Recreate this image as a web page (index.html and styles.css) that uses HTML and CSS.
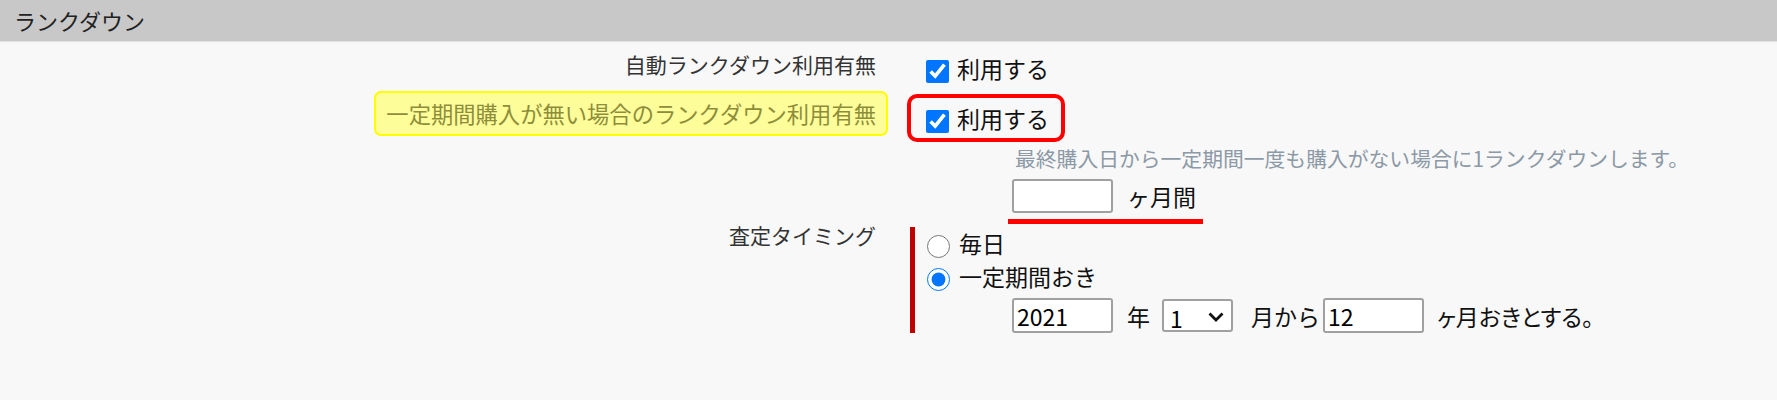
FILE: index.html
```html
<!DOCTYPE html>
<html lang="ja">
<head>
<meta charset="utf-8">
<title>ランクダウン</title>
<link rel="stylesheet" href="styles.css">
</head>
<body>
<div class="panel">
  <div class="panel-title">ランクダウン</div>
  <div class="form">
    <div class="row">
      <div class="label-cell"><span class="label">自動ランクダウン利用有無</span></div>
      <div class="field field-auto">
        <label class="check"><input type="checkbox" checked><span>利用する</span></label>
      </div>
    </div>
    <div class="row">
      <div class="label-cell"><span class="label label-highlight">一定期間購入が無い場合のランクダウン利用有無</span></div>
      <div class="field">
        <label class="check check-boxed"><input type="checkbox" checked><span>利用する</span></label>
        <p class="note">最終購入日から一定期間一度も購入がない場合に1ランクダウンします。</p>
        <div class="months-line"><input type="text" class="num-input"><span class="unit">ヶ月間</span></div>
      </div>
    </div>
    <div class="row row-timing">
      <div class="label-cell"><span class="label">査定タイミング</span></div>
      <div class="field field-timing">
        <label class="radio"><input type="radio" name="timing"><span>毎日</span></label>
        <label class="radio"><input type="radio" name="timing" checked><span>一定期間おき</span></label>
        <div class="interval">
          <input type="text" class="num-input" value="2021">
          <span class="u-year">年</span>
          <span class="select-wrap">
            <select class="month-select"><option>1</option></select>
            <svg class="chevron" viewBox="0 0 16 10" width="16" height="10"><polyline points="1.5,1.5 8,8 14.5,1.5" fill="none" stroke="#111" stroke-width="2.8"/></svg>
          </span>
          <span class="u-from">月から</span>
          <input type="text" class="num-input" value="12">
          <span class="u-tail">ヶ月おきとする。</span>
        </div>
      </div>
    </div>
  </div>
</div>
</body>
</html>
```
FILE: styles.css
```css
* { box-sizing: border-box; }
html, body { margin: 0; padding: 0; }
body {
  background: #f8f8f8;
  font-family: "Noto Sans CJK JP", "Noto Sans", sans-serif;
  color: #222;
}
.panel-title {
  height: 42px;
  background: #c8c8c8;
  border-bottom: 1px solid #e2e2e2;
  padding-left: 14px;
  font-size: 22px;
  line-height: 41px;
  color: #222;
}
.form { padding-top: 2px; }
.row { display: flex; align-items: flex-start; }
.label-cell {
  width: 888px;
  flex: none;
  display: flex;
  justify-content: flex-end;
}
.label {
  display: inline-block;
  border: 2px solid transparent;
  padding: 4px 10px;
  font-size: 21px;
  line-height: 28px;
  color: #333;
  white-space: nowrap;
}
.label-highlight {
  background: #fdfd9a;
  border-color: #ffff00;
  border-radius: 7px;
  color: #8d8d3a;
  font-size: 22.3px;
  line-height: 33px;
}
.row-timing .label { margin-top: -9px; }
.field { margin-left: 19px; }
.field-auto { padding: 6px 0 5px 19px; }
.check {
  display: flex;
  align-items: center;
  font-size: 23px;
  line-height: 36px;
  color: #111;
}
.check input, .radio input {
  width: 23px;
  height: 23px;
  margin: 6px 8px 0 0;
  accent-color: #0075ff;
  flex: none;
}
.check-boxed {
  width: fit-content;
  margin-top: 3px;
  border: 4px solid #ff0000;
  border-radius: 10px;
  padding: 2px 12px 2px 15px;
}
.note {
  margin: 3px 0 0 108px;
  font-size: 20.8px;
  line-height: 26px;
  color: #8c99a6;
  white-space: nowrap;
}
.months-line {
  display: flex;
  align-items: center;
  width: fit-content;
  margin: 8px 0 0 101px;
  padding: 0 7px 6px 4px;
  border-bottom: 5px solid #ff0000;
}
.num-input {
  width: 101px;
  height: 34px;
  border: 2px solid #a0a0a0;
  border-radius: 3px;
  background: #fff;
  font-family: "Noto Sans CJK JP", "Noto Sans", sans-serif;
  font-size: 23px;
  color: #000;
  padding: 0 3px;
  flex: none;
}
.unit { margin-left: 14px; font-size: 23px; color: #111; }
.field-timing {
  margin-top: 3px;
  margin-left: 22px;
  border-left: 5px solid #c00000;
  padding-left: 12px;
}
.radio {
  display: flex;
  align-items: center;
  font-size: 23px;
  line-height: 33px;
  color: #111;
}
.radio input { margin-right: 9px; }
.interval {
  display: flex;
  align-items: center;
  margin-top: 5px;
  padding-left: 85px;
  font-size: 23px;
  color: #111;
  white-space: nowrap;
}
.interval .num-input { height: 35px; }
.u-year { margin-left: 14px; }
.select-wrap { position: relative; margin-left: 12px; display: flex; }
.month-select {
  appearance: none;
  -webkit-appearance: none;
  width: 71px;
  height: 33px;
  border: 2px solid #a0a0a0;
  border-radius: 3px;
  background: #fff;
  font-family: "Noto Sans CJK JP", "Noto Sans", sans-serif;
  font-size: 23px;
  color: #000;
  padding: 0 0 0 6px;
}
.chevron {
  position: absolute;
  left: 46px;
  top: 50%;
  margin-top: -4px;
  pointer-events: none;
}
.u-from { margin-left: 18px; }
.interval .u-from + .num-input { margin-left: 3px; }
.u-tail { margin-left: 13px; font-feature-settings: "palt"; }
```
